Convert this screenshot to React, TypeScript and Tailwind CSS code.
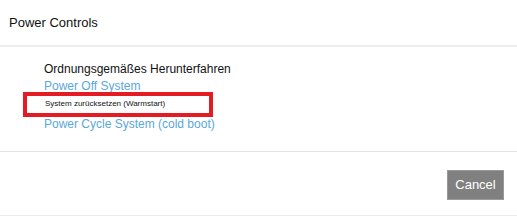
export default function App() {
  return (
    <div className="w-[517px] h-[217px] bg-white relative overflow-hidden" style={{ fontFamily: '"Liberation Sans", Arial, sans-serif' }}>
      <div className="h-[47px] border-b-2 border-[#ededed] pl-[9px] pt-[15px]">
        <div className="text-[13px] leading-[16px] text-[#111]">Power Controls</div>
      </div>
      <div className="h-[105px] border-b border-[#e3e3e3] pl-[44px] pt-[14px]">
        <div className="text-[12px] leading-[17px] text-[#111]">Ordnungsgemäßes Herunterfahren</div>
        <div className="text-[12px] leading-[17px] text-[#5aa8d8]">Power Off System</div>
        <div className="text-[8px] leading-[18px] pl-[1px] mb-[3px] text-[#111]">System zurücksetzen (Warmstart)</div>
        <div className="text-[12px] leading-[17px] text-[#5aa8d8]">Power Cycle System (cold boot)</div>
      </div>
      <div className="h-[64px] border-b border-[#ececec] flex justify-end items-start pt-[18px] pr-[13px]">
        <button className="w-[57px] h-[30px] bg-[#808080] border border-[#9a9a9a] text-white text-[13px]">Cancel</button>
      </div>
      <div className="absolute left-[23px] top-[92px] w-[190px] h-[25px] border-4 border-[#e41b23]" />
    </div>
  );
}
